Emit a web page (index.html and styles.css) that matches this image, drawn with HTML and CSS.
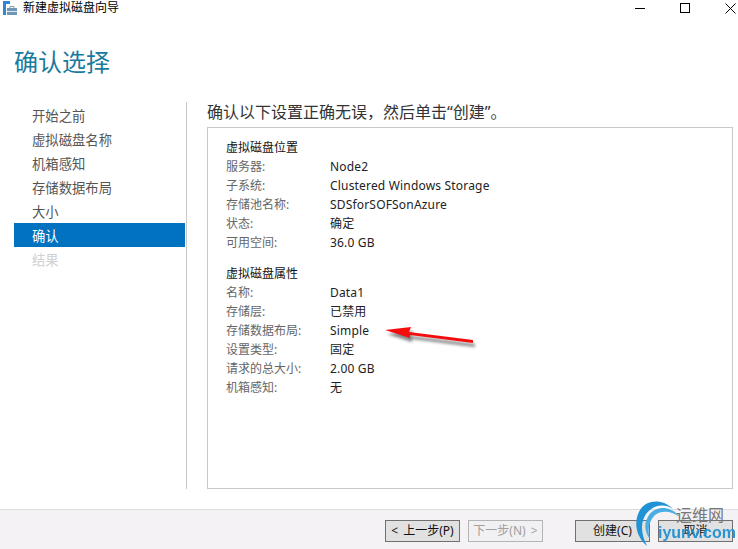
FILE: index.html
```html
<!DOCTYPE html>
<html lang="zh-CN">
<head>
<meta charset="utf-8">
<title>新建虚拟磁盘向导</title>
<link rel="stylesheet" href="styles.css">
</head>
<body>
<div class="window">
  <header class="titlebar">
    <svg class="app-icon" width="18" height="16" viewBox="0 0 18 16">
      <rect x="3" y="1" width="7" height="3" fill="#2f86dc"/>
      <rect x="3" y="1" width="3" height="14" fill="#2f86dc"/>
      <rect x="7" y="8" width="10" height="7" fill="#6f97b5"/>
      <rect x="7" y="11" width="10" height="1" fill="#dfe9f1"/>
      <path d="M10 8V6.5H14V8" stroke="#7e9db5" fill="none"/>
    </svg>
    <span class="title-text">新建虚拟磁盘向导</span>
    <div class="win-controls">
      <svg width="11" height="11" viewBox="0 0 11 11"><path d="M0 5.5H10" stroke="#000" fill="none"/></svg>
      <svg width="11" height="11" viewBox="0 0 11 11"><rect x="0.5" y="0.5" width="9" height="9" stroke="#000" fill="none"/></svg>
      <svg width="11" height="11" viewBox="0 0 11 11"><path d="M0.5 0.5L10.5 10.5M10.5 0.5L0.5 10.5" stroke="#000" fill="none"/></svg>
    </div>
  </header>
  <h1 class="page-title">确认选择</h1>
  <div class="main">
    <nav class="steps">
      <div class="step">开始之前</div>
      <div class="step">虚拟磁盘名称</div>
      <div class="step">机箱感知</div>
      <div class="step">存储数据布局</div>
      <div class="step">大小</div>
      <div class="step active">确认</div>
      <div class="step disabled">结果</div>
    </nav>
    <section class="content">
      <p class="lead">确认以下设置正确无误，然后单击“创建”。</p>
      <div class="summary">
        <h2 class="group-title">虚拟磁盘位置</h2>
        <dl class="props">
          <dt>服务器:</dt><dd>Node2</dd>
          <dt>子系统:</dt><dd>Clustered Windows Storage</dd>
          <dt>存储池名称:</dt><dd>SDSforSOFSonAzure</dd>
          <dt>状态:</dt><dd>确定</dd>
          <dt>可用空间:</dt><dd>36.0 GB</dd>
        </dl>
        <h2 class="group-title second">虚拟磁盘属性</h2>
        <dl class="props">
          <dt>名称:</dt><dd>Data1</dd>
          <dt>存储层:</dt><dd>已禁用</dd>
          <dt>存储数据布局:</dt><dd>Simple</dd>
          <dt>设置类型:</dt><dd>固定</dd>
          <dt>请求的总大小:</dt><dd>2.00 GB</dd>
          <dt>机箱感知:</dt><dd>无</dd>
        </dl>
      </div>
    </section>
  </div>
  <footer class="footer">
    <button class="btn">&lt; 上一步(P)</button>
    <button class="btn off">下一步(N) &gt;</button>
    <button class="btn create">创建(C)</button>
    <button class="btn">取消</button>
  </footer>
  <svg class="arrow" width="96" height="34" viewBox="0 0 96 34">
    <defs><filter id="sh" x="-20%" y="-50%" width="140%" height="220%"><feGaussianBlur stdDeviation="1.8"/></filter></defs>
    <path d="M1 7L27 4L25 9L89 17L89 20L26 12L26 15Z" fill="#333" opacity=".6" filter="url(#sh)" transform="translate(2 4)"/>
    <path d="M1 7L27 4L25 9L89 17L89 20L26 12L26 15Z" fill="#f40d0d"/>
  </svg>
  <div class="watermark">
    <svg class="swirl" width="60" height="51" viewBox="0 0 60 51">
      <path d="M41 11C31 1 15 1 8 12C1 24 4 39 15 48C9 36 8 25 14 16C21 7 32 5 41 11Z" fill="#1f93d6"/>
      <path d="M48 19C38 7 24 8 17 17C11 26 13 35 18 41C15 31 17 23 23 17C30 12 39 13 48 19Z" fill="#4aaee3"/>
    </svg>
    <span class="wm-cn">运维网</span>
    <span class="wm-en">iyunv.com</span>
  </div>
</div>
</body>
</html>
```
FILE: styles.css
```css
* { box-sizing: border-box; }
html, body { margin: 0; padding: 0; }
body {
  width: 738px;
  height: 549px;
  overflow: hidden;
  background: #fff;
  font-family: "Noto Sans", "Noto Sans CJK SC", sans-serif;
  font-size: 12px;
  color: #333;
}
.window {
  position: relative;
  width: 738px;
  height: 549px;
  display: flex;
  flex-direction: column;
}
.titlebar {
  height: 16px;
  display: flex;
  align-items: center;
  flex: none;
}
.app-icon { flex: none; }
.title-text {
  margin-left: 5px;
  font-size: 12px;
  line-height: 16px;
  color: #000;
}
.win-controls {
  margin-left: auto;
  display: flex;
  gap: 34px;
  padding-right: 2px;
}
.win-controls svg { display: block; }
.page-title {
  margin: 29px 0 0 14px;
  font-size: 24px;
  font-weight: 400;
  line-height: 34px;
  height: 34px;
  color: #1a7a9e;
  flex: none;
}
.main {
  flex: none;
  height: 387px;
  margin-top: 23px;
  display: flex;
  padding-left: 14px;
}
.steps {
  width: 173px;
  padding-top: 1px;
  border-right: 1px solid #c8c8c8;
  padding-right: 1px;
  flex: none;
}
.step {
  height: 24px;
  padding-top: 2px;
  line-height: 22px;
  padding-left: 18px;
  font-size: 13.33px;
  color: #555;
}
.step.active { background: #0072c0; color: #fff; }
.step.disabled { color: #d0d0d0; }
.content {
  margin-left: 20px;
  width: 526px;
  display: flex;
  flex-direction: column;
}
.lead {
  margin: 0;
  height: 25px;
  font-size: 16px;
  line-height: 20px;
  color: #333;
}
.summary {
  flex: 1;
  border: 1px solid #c8c8c8;
  padding: 10px 18px 0;
}
.group-title {
  margin: 0;
  font-size: 12px;
  font-weight: 400;
  line-height: 19px;
  height: 19px;
  color: #111;
}
.group-title.second { margin-top: 12px; }
.props {
  margin: 0;
  display: grid;
  grid-template-columns: 104px 1fr;
  grid-auto-rows: 19px;
  line-height: 19px;
}
.props dt { color: #666; }
.props dd { margin: 0; color: #222; letter-spacing: .18px; }
.footer {
  margin-top: 20px;
  flex: 1;
  border-top: 1px solid #dedbdf;
  background: #f5f2f6;
  display: flex;
  align-items: flex-start;
  padding: 10px 5px 0 385px;
}
.btn {
  width: 75px;
  height: 22px;
  padding: 0;
  border: 1px solid #707070;
  background: #e1e1e1;
  color: #111;
  font-family: inherit;
  font-size: 12px;
  line-height: 20px;
  margin-right: 8px;
  word-spacing: 2px;
}
.btn:last-child { margin-right: 0; }
.btn.off {
  border-color: #b4b4b4;
  background: #f1f0f2;
  color: #a0a0a0;
}
.btn.create { margin-left: 24px; }
.arrow {
  position: absolute;
  left: 384px;
  top: 323px;
}
.watermark {
  position: absolute;
  left: 632px;
  top: 498px;
  width: 106px;
  height: 51px;
}
.swirl { position: absolute; left: 0; top: 0; }
.wm-cn {
  position: absolute;
  left: 44px;
  top: 7px;
  font-size: 16px;
  line-height: 20px;
  color: #777;
}
.wm-en {
  position: absolute;
  left: 26px;
  top: 26px;
  font-family: "Liberation Sans", sans-serif;
  font-size: 16px;
  font-weight: 700;
  line-height: 18px;
  color: #1c8fd0;
  opacity: .92;
}
```
